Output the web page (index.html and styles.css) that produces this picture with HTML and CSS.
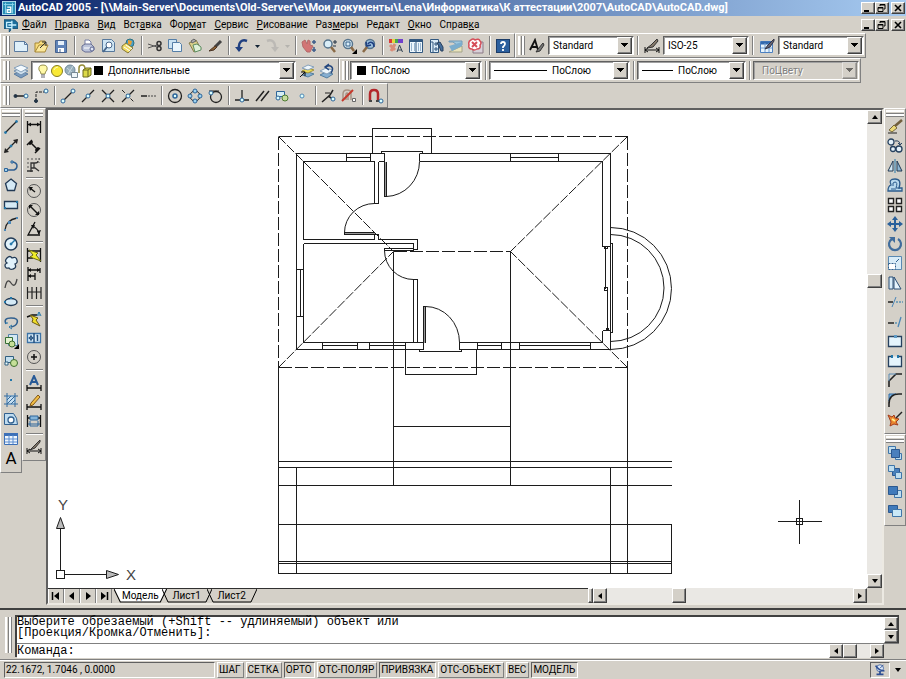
FILE: index.html
```
<!DOCTYPE html>
<html lang="ru">
<head>
<meta charset="UTF-8">
<meta name="viewport" content="width=device-width, initial-scale=1.0">
<title>AutoCAD 2005</title>
<link rel="stylesheet" href="styles.css">
</head>
<body>
<header class="titlebar">
<svg class="app-icon" viewBox="0 0 16 16"><rect x="0.5" y="0.5" width="15" height="15" fill="#2a8fb8" stroke="#bfe8f4"/><path d="M4 2v12M12 2v12M2 4h12" stroke="#8fd8ee"/><path d="M6 7h4v6H6v-3h4" stroke="#fff" stroke-width="1.5"/></svg>
<h1>AutoCAD 2005 - [\\Main-Server\Documents\Old-Server\e\Мои документы\Lena\Информатика\К аттестации\2007\AutoCAD\AutoCAD.dwg]</h1>
<div class="window-buttons">
<button aria-label="Свернуть"><svg viewBox="0 0 12 10"><path d="M2 8h5" stroke-width="2"/></svg></button>
<button aria-label="Восстановить"><svg viewBox="0 0 12 10"><path d="M4 3V1.5h5V6H8M4 2h5M2 4.5h5V8.5H2zM2 5h5"/></svg></button>
<button class="close" aria-label="Закрыть"><svg viewBox="0 0 12 10"><path d="M3 2l6 6M9 2L3 8" stroke-width="1.6"/></svg></button>
</div>
</header>
<nav class="menubar">
<svg class="app-icon" viewBox="0 0 16 16"><path d="M0 2h12l4 4v6H9l-3 4v-4H0z" fill="#1d6f9c" stroke="#164e74"/><path d="M3 5h6v6H3zM9 3v11M5 8h9" stroke="#c8f0ff" stroke-width="1.5"/></svg>
<a href="#"><u>Ф</u>айл</a>
<a href="#"><u>П</u>равка</a>
<a href="#"><u>В</u>ид</a>
<a href="#">Вст<u>а</u>вка</a>
<a href="#">Фор<u>м</u>ат</a>
<a href="#"><u>С</u>ервис</a>
<a href="#"><u>Р</u>исование</a>
<a href="#">Раз<u>м</u>еры</a>
<a href="#">Ре<u>д</u>акт</a>
<a href="#"><u>О</u>кно</a>
<a href="#">Справ<u>к</u>а</a>
<div class="window-buttons">
<button aria-label="Свернуть окно"><svg viewBox="0 0 12 10"><path d="M2 8h5" stroke-width="2"/></svg></button>
<button aria-label="Восстановить окно"><svg viewBox="0 0 12 10"><path d="M4 3V1.5h5V6H8M4 2h5M2 4.5h5V8.5H2zM2 5h5"/></svg></button>
<button class="close" aria-label="Закрыть окно"><svg viewBox="0 0 12 10"><path d="M3 2l6 6M9 2L3 8" stroke-width="1.6"/></svg></button>
</div>
</nav>

<div class="toolbar-row">
<!-- Standard -->
<div class="toolbar">
<i class="grip"></i>
<button class="tool" title="Создать"><svg viewBox="0 0 16 16"><path d="M1.500 3.500h10l3 3v7h-13z" fill="#dff0fa" stroke="#5b7ba0"/><path d="M11.500 3.500v3h3" stroke="#5b7ba0"/></svg></button>
<button class="tool" title="Открыть"><svg viewBox="0 0 16 16"><path d="M2 14V5h4l1-2h5v4" fill="#f7dc7c" stroke="#a88836"/><path d="M2 14l4-7h9l-3 7z" fill="#fbe89c" stroke="#a88836"/><path d="M7 10l6-6M13 8V4H9" stroke="#333"/></svg></button>
<button class="tool" title="Сохранить"><svg viewBox="0 0 16 16"><path d="M2.500 2.500h11v12h-11z" fill="#5f83b8" stroke="#46628e"/><path d="M5 3h6v4H5z" fill="#e6f0fa" stroke="none"/><path d="M5 10h6v4H5z" fill="#fff" stroke="none"/><path d="M7 11v3" stroke="#46628e"/></svg></button>
<i class="sep"></i>
<button class="tool" title="Печать"><svg viewBox="0 0 16 16"><path d="M5 7V2h4l2 2v3" fill="#fff" stroke="#777fa5"/><path d="M2 8l3-2h6l3 3v3l-3 2H5l-3-2z" fill="#bcc4da" stroke="#686f94"/><path d="M4 10h7" stroke="#fff"/><circle cx="12" cy="11" r="2" fill="#dfe6f6" stroke="#5e6790"/></svg></button>
<button class="tool" title="Просмотр"><svg viewBox="0 0 16 16"><path d="M2.500 1.500h9l3 3v9h-12z" fill="#cfe5f3" stroke="#56789c"/><circle cx="9" cy="7" r="3" fill="#fff" stroke="#48688c"/><path d="M7 9l-4 5" stroke="#48688c" stroke-width="2"/></svg></button>
<button class="tool" title="Публикация"><svg viewBox="0 0 16 16"><circle cx="10" cy="5" r="4" fill="#48a0c8" stroke="#2e7080"/><path d="M8 2l4 1-1 4-3-1z" fill="#e8a030" stroke="none"/><path d="M2 8l4-3 7 5-5 5-6-4z" fill="#f1dc66" stroke="#857838"/><path d="M4 9l6 4M6 7l6 4" stroke="#fff"/></svg></button>
<i class="sep"></i>
<button class="tool" title="Вырезать"><svg viewBox="0 0 16 16"><path d="M1 6l9 3M1 10l9-3" stroke="#555"/><circle cx="12" cy="5.500" r="2" stroke="#333" stroke-width="1.500"/><circle cx="12" cy="10.500" r="2" stroke="#333" stroke-width="1.500"/></svg></button>
<button class="tool" title="Копировать"><svg viewBox="0 0 16 16"><path d="M1.500 1.500h8v9h-8z" fill="#cbe3f3" stroke="#557fa8"/><path d="M5.500 4.500h7l2 2v7h-9z" fill="#eaf6fd" stroke="#557fa8"/></svg></button>
<button class="tool" title="Вставить"><svg viewBox="0 0 16 16"><path d="M2 5l7-3 5 9-7 3z" fill="#d9cf8a" stroke="#837b4b"/><path d="M4 3l3-2 2 2-4 2z" fill="#aaa" stroke="#666"/><path d="M6 7l4-1 4 3v3l-6 2z" fill="#dff0d8" stroke="#5e8e62"/></svg></button>
<button class="tool" title="Копирование свойств"><svg viewBox="0 0 16 16"><path d="M14 3L8 9" stroke="#444" stroke-width="3"/><path d="M8 8l-6 5 5-1 3-3z" fill="#8b6134" stroke="#4b3525"/></svg></button>
<i class="sep"></i>
<button class="tool" title="Отменить"><svg viewBox="0 0 16 16"><path d="M13 3C8 1 4 4 5 11" stroke="#1f3f80" stroke-width="2.500"/><path d="M1 9h8l-4 5z" fill="#1f3f80" stroke="none"/></svg></button>
<button class="tool tiny" title="Список отмены"><svg viewBox="0 0 8 16"><path d="M2 7h5L4.500 10z" fill="#123" stroke="none"/></svg></button>
<button class="tool faded" title="Повторить"><svg viewBox="0 0 16 16"><path d="M3 3c5-2 9 1 8 8" stroke="#999" stroke-width="2.500"/><path d="M7 9h8l-4 5z" fill="#999" stroke="none"/></svg></button>
<button class="tool tiny faded" title="Список повтора"><svg viewBox="0 0 8 16"><path d="M2 7h5L4.500 10z" fill="#888" stroke="none"/></svg></button>
<i class="sep"></i>
<button class="tool" title="Панорамирование"><svg viewBox="0 0 16 16"><path d="M1 4l3-2 2 4 1-4 2 1v4l3 1-3 6H6L2 9z" fill="#d27575" stroke="#b46a6a"/><path d="M13 2v4M11 4h4M13 9v5M11 12h4" stroke="#3d5c8b" stroke-width="1.500"/></svg></button>
<button class="tool" title="Зумирование"><svg viewBox="0 0 16 16"><circle cx="7" cy="6" r="4" fill="#d9edf7" stroke="#56748d" stroke-width="1.500"/><path d="M10 9l4 5" stroke="#8a6a47" stroke-width="2.500"/><path d="M14 2v4M12 4h4M12 8h3" stroke="#234"/></svg></button>
<button class="tool" title="Рамка"><svg viewBox="0 0 16 16"><circle cx="7" cy="6" r="4.500" fill="#d9edf7" stroke="#56748d" stroke-width="1.500"/><path d="M5 4h4v4H5z" stroke="#36618a"/><path d="M10 9l3 4" stroke="#8a6a47" stroke-width="2.500"/><path d="M16 11v5h-5z" fill="#000" stroke="none"/></svg></button>
<button class="tool" title="Предыдущий"><svg viewBox="0 0 16 16"><circle cx="9" cy="6" r="4.500" fill="#9cc0dc" stroke="#56748d" stroke-width="1.500"/><path d="M6 9l-4 5" stroke="#8a6a47" stroke-width="2.500"/><path d="M13 9C13 4 9 3 7 6M5 4l1 4 4-1" stroke="#1f3f80" stroke-width="1.500"/></svg></button>
<i class="sep"></i>
<button class="tool" title="Свойства"><svg viewBox="0 0 16 16"><path d="M1 1h3v4H1z" fill="#d93a3a" stroke="none"/><path d="M4 1h3v4H4z" fill="#e6d740" stroke="none"/><path d="M7 1h3v4H7z" fill="#42ab4c" stroke="none"/><path d="M10 1h5v4h-5z" fill="#7040cc" stroke="none"/><path d="M2 7l5 5M3 13l4-7" stroke="#d98c78" stroke-width="3"/><path d="M9 14l2.500-7 3 7M10 12h4" stroke="#345"/></svg></button>
<button class="tool" title="Центр управления"><svg viewBox="0 0 16 16"><path d="M1.500 1.500h13v13h-13z" fill="#eef7fd" stroke="#31577f"/><path d="M2 3h12" stroke="#31577f" stroke-width="2"/><path d="M8 4v10" stroke="#31577f"/><path d="M3 6h1M6 6h1M3 8h1M6 8h1M3 10h1M6 10h1M3 12h1M6 12h1M10 6h1M12 6h1M10 8h1M12 8h1M10 10h1M12 10h1M10 12h1M12 12h1" stroke="#4273a1"/></svg></button>
<button class="tool" title="Инструментальные палитры"><svg viewBox="0 0 16 16"><path d="M2.500 1.500h8v13h-8z" fill="#dcedf9" stroke="#31577f"/><path d="M2 4h3v10M7 5h2v2H7zM7 10h2v2H7z" stroke="#31577f"/><path d="M9 5l3-1 3 5v4h-2l-2-5z" fill="#446e9c" stroke="#29405e"/></svg></button>
<button class="tool" title="Подшивки"><svg viewBox="0 0 16 16"><path d="M1 3h13v4H9L5 4H1z" fill="#9dc7df" stroke="#7199b5"/><path d="M1 14l13-6v6z" fill="#e9e3bc" stroke="#a4a488"/><path d="M1 8l13-4v4L4 13z" fill="#7badcd" stroke="none"/></svg></button>
<button class="tool" title="Пометки"><svg viewBox="0 0 16 16"><path d="M5 4h10v11H5z" fill="#d8d0d8" stroke="#8c7b86"/><path d="M3 2q2-2 4 0q4-2 5 1q2 2 0 4q1 4-3 4q-3 2-5 0q-4 0-3-4q-1-4 2-5z" fill="#fff" stroke="#d64d58" stroke-width="1.500"/><path d="M4 4l5 5M9 4L4 9" stroke="#d64d58" stroke-width="2"/></svg></button>
<i class="sep"></i>
<button class="tool" title="Справка"><svg viewBox="0 0 16 16"><rect x="1.500" y="1.500" width="13" height="13" fill="#2b5f9e" stroke="#1c3c68"/><path d="M6 6q0-2 2-2t2 2q0 1-2 3v1M8 11v2" stroke="#fff" stroke-width="1.800"/></svg></button>
</div>
<!-- Styles -->
<div class="toolbar">
<i class="grip"></i>
<button class="tool wide" title="Текстовый стиль"><svg viewBox="0 0 16 16"><path d="M1 12L6 2l3 10M3 9h5" stroke="#111" stroke-width="1.800"/><path d="M14 5l-5 6-2 3 4-1 4-6z" fill="#777" stroke="#333"/></svg></button>
<div class="combo w86"><select aria-label="Текстовый стиль"><option>Standard</option></select></div>
<i class="sep"></i>
<button class="tool wide" title="Размерный стиль"><svg viewBox="0 0 16 16"><path d="M1 9v6M15 9v6M1 12h14M4 10l-3 2 3 2M12 10l3 2-3 2" stroke="#111"/><path d="M13 1L7 7l-4 3 6-1 5-6z" fill="#877a6b" stroke="#333"/></svg></button>
<div class="combo w86"><select aria-label="Размерный стиль"><option>ISO-25</option></select></div>
<i class="sep"></i>
<button class="tool wide" title="Стиль таблиц"><svg viewBox="0 0 16 16"><path d="M1.500 3.500h12v11h-12z" fill="#e7f3fb" stroke="#4b7fc0"/><path d="M2 5h11" stroke="#3269ae" stroke-width="3"/><path d="M2 10h11M6 5v9M10 5v9" stroke="#6f9bd0"/><path d="M15 1L9 7l-3 4 5-2 4-6z" fill="#667" stroke="#334"/></svg></button>
<div class="combo w86"><select aria-label="Стиль таблиц"><option>Standard</option></select></div>
</div>
</div>

<div class="toolbar-row">
<!-- Layers -->
<div class="toolbar">
<i class="grip"></i>
<button class="tool" title="Слои"><svg viewBox="0 0 16 16"><path d="M1 11l7-3 7 3-7 4z" fill="#7b9cc0" stroke="#5c7c9f"/><path d="M1 8l7-3 7 3-7 4z" fill="#cfe0ee" stroke="#7390ad"/><path d="M1 5l7-3 7 3-7 4z" fill="#f4fafe" stroke="#86a1bb"/></svg></button>
<div class="combo layer-combo">
<svg class="mark" viewBox="0 0 14 16"><path d="M5 11q0-2-2-4q-1-5 4-5t4 5q-2 2-2 4z" fill="#fff9a8" stroke="#96904d"/><path d="M5 12h4M5 14h4" stroke="#667"/></svg>
<svg class="mark" viewBox="0 0 14 16"><circle cx="7" cy="8" r="5.500" fill="#f9e936" stroke="#857c21"/><path d="M4 7q1-3 4-3" stroke="#fffbc0"/></svg>
<svg class="mark" viewBox="0 0 14 16"><circle cx="6" cy="7" r="5" fill="#98afbc" stroke="#71899a"/><path d="M3 5l6 5M9 3L4 11" stroke="#c8d8e0"/><path d="M7.500 9.500h6v5h-6z" fill="#eef5f8" stroke="#778894"/></svg>
<svg class="mark" viewBox="0 0 14 16"><path d="M1 10V5q0-3 3-3t3 4" stroke="#958c35" stroke-width="1.500"/><path d="M5 7l3-2h5v7l-3 2H5z" fill="#dcd949" stroke="#6c6a20"/><path d="M5 7h5v7M10 7l3-2" stroke="#6c6a20"/></svg>
<i class="swatch"></i>
<select aria-label="Слой"><option>Дополнительные</option></select>
</div>
<button class="tool" title="Сделать слой текущим"><svg viewBox="0 0 16 16"><path d="M3 12l6-3 6 2-6 3z" fill="#84aed1" stroke="#557e9f"/><path d="M3 8l6-3 6 2-6 3z" fill="#eadb58" stroke="#a6963a"/><path d="M3 5l6-3 6 2-6 3z" fill="#eff7fb" stroke="#86a1bb"/><path d="M1 14l5-5M2 9h4v4" stroke="#111"/></svg></button>
<button class="tool" title="Предыдущее состояние"><svg viewBox="0 0 16 16"><path d="M1 12l6-3 7 2-6 4z" fill="#84aed1" stroke="#557e9f"/><path d="M1 8l6-3 7 2-6 4z" fill="#eff7fb" stroke="#86a1bb"/><path d="M12 10c4-6-1-9-5-6M10 1L6 4l4 3" stroke="#24477e" stroke-width="1.500"/></svg></button>
</div>
<!-- Properties -->
<div class="toolbar">
<i class="grip"></i>
<div class="combo color-combo"><i class="swatch"></i><select aria-label="Цвет"><option>ПоСлою</option></select></div>
<i class="sep"></i>
<div class="combo linetype-combo"><i class="line long"></i><select aria-label="Тип линий"><option>ПоСлою</option></select></div>
<i class="sep"></i>
<div class="combo weight-combo"><i class="line"></i><select aria-label="Вес линий"><option>ПоСлою</option></select></div>
<i class="sep"></i>
<div class="combo plot-combo off"><select aria-label="Стиль печати" disabled><option>ПоЦвету</option></select></div>
</div>
</div>

<div class="toolbar-row">
<!-- Object snap -->
<div class="toolbar">
<i class="grip"></i>
<button class="tool" title="Точка отслеживания"><svg viewBox="0 0 16 16"><path d="M3 8h8" stroke="#222" stroke-width="1.500"/><circle cx="2.500" cy="8" r="1.500" fill="#234" stroke="#234"/><circle cx="13" cy="8" r="2" fill="#dff" stroke="#2e6599"/></svg></button>
<button class="tool" title="Смещение"><svg viewBox="0 0 16 16"><path d="M3 13V4h8" stroke="#222" stroke-dasharray="3 1"/><circle cx="3" cy="13" r="1.500" fill="#234" stroke="#234"/><circle cx="13" cy="3" r="2" fill="#dff" stroke="#2e6599"/></svg></button>
<i class="sep"></i>
<button class="tool" title="Конечная точка"><svg viewBox="0 0 16 16"><path d="M4 12l8-8" stroke="#222" stroke-width="1.300"/><circle cx="3" cy="13" r="2" fill="#dff" stroke="#2e6599"/><circle cx="13" cy="3" r="2" fill="#dff" stroke="#2e6599"/></svg></button>
<button class="tool" title="Середина"><svg viewBox="0 0 16 16"><path d="M2 14L14 2" stroke="#222" stroke-width="1.300"/><circle cx="8" cy="8" r="2" fill="#dff" stroke="#2e6599"/></svg></button>
<button class="tool" title="Пересечение"><svg viewBox="0 0 16 16"><path d="M2 2l12 12M2 14L14 2" stroke="#222" stroke-width="1.300"/><circle cx="8" cy="8" r="2" fill="#dff" stroke="#2e6599"/></svg></button>
<button class="tool" title="Кажущееся пересечение"><svg viewBox="0 0 16 16"><path d="M2 14L14 2" stroke="#222" stroke-width="1.300"/><path d="M2 2l12 12" stroke="#222" stroke-dasharray="4 2"/><circle cx="8" cy="8" r="2" fill="#dff" stroke="#2e6599"/></svg></button>
<button class="tool" title="Продолжение"><svg viewBox="0 0 16 16"><path d="M1 8h6" stroke="#222" stroke-width="1.500"/><path d="M8 8h8" stroke="#444" stroke-dasharray="2 1"/></svg></button>
<i class="sep"></i>
<button class="tool" title="Центр"><svg viewBox="0 0 16 16"><circle cx="8" cy="8" r="6.500" stroke="#222" stroke-width="1.300"/><circle cx="8" cy="8" r="2" fill="#dff" stroke="#2e6599" stroke-width="1.500"/></svg></button>
<button class="tool" title="Квадрант"><svg viewBox="0 0 16 16"><circle cx="8" cy="8" r="5" stroke="#222"/><g fill="#9ed2ef" stroke="#2e6599"><circle cx="8" cy="3" r="2"/><circle cx="8" cy="13" r="2"/><circle cx="3" cy="8" r="2"/><circle cx="13" cy="8" r="2"/></g></svg></button>
<button class="tool" title="Касательная"><svg viewBox="0 0 16 16"><circle cx="9" cy="9" r="5.500" stroke="#222" stroke-width="1.300"/><path d="M2 3h10" stroke="#222"/><circle cx="4" cy="5" r="2" fill="#dff" stroke="#2e6599"/></svg></button>
<i class="sep"></i>
<button class="tool" title="Нормаль"><svg viewBox="0 0 16 16"><path d="M8 2v10M1 12h14" stroke="#222" stroke-width="1.300"/><circle cx="8" cy="12" r="2" fill="#dff" stroke="#2e6599"/></svg></button>
<button class="tool" title="Параллельно"><svg viewBox="0 0 16 16"><path d="M2 13L10 3M7 13l8-10" stroke="#222" stroke-width="1.500"/></svg></button>
<button class="tool" title="Точка вставки"><svg viewBox="0 0 16 16"><path d="M2.500 3.500h8v5h-8z" fill="#d6eef3" stroke="#2e6599"/><circle cx="11" cy="10" r="3" fill="#c7dd9f" stroke="#4f7d33"/><circle cx="4" cy="10" r="2" fill="#dff" stroke="#2e6599"/></svg></button>
<button class="tool" title="Узел"><svg viewBox="0 0 16 16"><circle cx="8" cy="8" r="2" fill="#dff" stroke="#5088b4"/></svg></button>
<i class="sep"></i>
<button class="tool" title="Ближайшая"><svg viewBox="0 0 16 16"><path d="M1 14l8-7 3-5M7 8l5 3" stroke="#222" stroke-width="1.500"/><path d="M4 5h5" stroke="#222"/><circle cx="12" cy="11" r="2" fill="#dff" stroke="#2e6599"/></svg></button>
<button class="tool" title="Ничего"><svg viewBox="0 0 16 16"><path d="M2 12V6q0-4 4-4t4 3v7M5 12V6q1-2 2 0v6" stroke="#a89485" stroke-width="1.500"/><path d="M1 13L12 2" stroke="#c7392b" stroke-width="2"/><path d="M11.500 10.500h3v3h-3z" fill="#fff" stroke="#666"/></svg></button>
<i class="sep"></i>
<button class="tool" title="Режимы привязки"><svg viewBox="0 0 16 16"><path d="M2 13V6q0-4 4-4t4 4v7" stroke="#b3272b" stroke-width="2.500"/><path d="M1 13h3M8 13h3" stroke="#444" stroke-width="2"/><circle cx="13" cy="13" r="2" fill="#dff" stroke="#2e6599"/></svg></button>
</div>
</div>

<main class="workspace">
<!-- Draw -->
<div class="toolbar vertical alternate draw">
<i class="grip"></i>
<button class="tool" title="Отрезок"><svg viewBox="0 0 16 16"><path d="M3 13L13 3" stroke="#222" stroke-width="1.300"/><circle cx="2.500" cy="13.500" r="1" fill="#27a" stroke="#27a"/><circle cx="13.500" cy="2.500" r="1" fill="#27a" stroke="#27a"/></svg></button>
<button class="tool" title="Прямая"><svg viewBox="0 0 16 16"><path d="M2 14L14 2" stroke="#222" stroke-width="1.300"/><path d="M1 15l1-5 4 4zM15 1l-5 1 4 4z" fill="#222" stroke="none"/><circle cx="8" cy="8" r="1" fill="#27a" stroke="#27a"/></svg></button>
<button class="tool" title="Полилиния"><svg viewBox="0 0 16 16"><path d="M2 12h9q3-1 3-4t-4-4H9" stroke="#315f91" stroke-width="1.500"/><path d="M1.500 10.500h3v3h-3zM8 3h2v2H8z" fill="#a5d4ef" stroke="#2e6599"/></svg></button>
<button class="tool" title="Многоугольник"><svg viewBox="0 0 16 16"><path d="M8 2l5.500 4.500-2 7h-7l-2-7z" fill="#d5eaf6" stroke="#223a55" stroke-width="1.300"/></svg></button>
<button class="tool" title="Прямоугольник"><svg viewBox="0 0 16 16"><path d="M1.500 4.500h13v7h-13z" fill="#d5eaf6" stroke="#223a55" stroke-width="1.300"/><path d="M1 10h2v2H1zM13 4h2v2h-2z" fill="#27a" stroke="none"/></svg></button>
<button class="tool" title="Дуга"><svg viewBox="0 0 16 16"><path d="M2 14Q3 4 14 2" stroke="#222" stroke-width="1.300"/><path d="M1 13h2v2H1zM5 5h3v3H5zM13 1h2v2h-2z" fill="#4c88b9" stroke="none"/></svg></button>
<button class="tool" title="Круг"><svg viewBox="0 0 16 16"><circle cx="8" cy="8" r="6" fill="#e1f2fb" stroke="#223a55" stroke-width="1.500"/><path d="M8 8l4-4" stroke="#27a" stroke-width="1.500"/><circle cx="8" cy="8" r="1" fill="#27a" stroke="#27a"/></svg></button>
<button class="tool" title="Облако"><svg viewBox="0 0 16 16"><path d="M4 3q3-3 5 0q4-2 5 2q1 3-2 4q2 4-2 5q-3 1-4-1q-4 1-4-3q0-1 2-2q-3-2 0-5z" fill="#e1f2fb" stroke="#223a55" stroke-width="1.300"/></svg></button>
<button class="tool" title="Сплайн"><svg viewBox="0 0 16 16"><path d="M2 13Q4 2 8 8T14 4" stroke="#444" stroke-width="1.300"/></svg></button>
<button class="tool" title="Эллипс"><svg viewBox="0 0 16 16"><ellipse cx="8" cy="8" rx="6" ry="3.500" fill="#d5eaf6" stroke="#223a55" stroke-width="1.500"/><path d="M7 3h2v2H7zM1 7h2v2H1z" fill="#27a" stroke="none"/></svg></button>
<button class="tool" title="Эллиптическая дуга"><svg viewBox="0 0 16 16"><path d="M3 10Q0 4 8 4t6 5q-1 3-6 4" stroke="#31608f" stroke-width="1.500"/><path d="M5 9H2M9 11l-3 2 3 2" stroke="#27a"/></svg></button>
<button class="tool" title="Вставить блок"><svg viewBox="0 0 16 16"><path d="M5.500 1.500h9v11h-9z" fill="#d4e8f4" stroke="#5481a7"/><path d="M2.500 4.500h7v6h-7z" fill="#e4f2d0" stroke="#356e35"/><circle cx="9" cy="11" r="3" fill="#c5df98" stroke="#3e6d2f"/><path d="M16 11v5h-5z" fill="#000" stroke="none"/></svg></button>
<button class="tool" title="Создать блок"><svg viewBox="0 0 16 16"><path d="M2.500 3.500h8v6h-8z" fill="#c4dfee" stroke="#315f80"/><circle cx="11" cy="10" r="3.500" fill="#c5df98" stroke="#3e6d2f"/><path d="M2 9h3v3H2z" fill="#eff" stroke="#315f80"/></svg></button>
<button class="tool" title="Точка"><svg viewBox="0 0 16 16"><path d="M7 7h2v2H7z" fill="#27a" stroke="none"/></svg></button>
<button class="tool" title="Штриховка"><svg viewBox="0 0 16 16"><path d="M3 3h10v10H3z" fill="#c7e0f2" stroke="none"/><path d="M1 4h14M1 12h14M4 1v14M12 1v14M4 8l4-4M4 12l8-8M8 12l4-4" stroke="#356999"/></svg></button>
<button class="tool" title="Область"><svg viewBox="0 0 16 16"><path d="M1.500 2.500h9q4 4 4 11h-13z" fill="#bfdcf0" stroke="#31608f"/><circle cx="8" cy="9" r="3" fill="#fff" stroke="#31608f" stroke-width="1.300"/></svg></button>
<button class="tool" title="Таблица"><svg viewBox="0 0 16 16"><path d="M1.500 2.500h13v11h-13z" fill="#f0f7fd" stroke="#3c70b8"/><path d="M1 3.500h14" stroke="#3c70b8" stroke-width="3"/><path d="M2 8h12M2 11h12M6 4v9M10 4v9" stroke="#5a8cd0"/></svg></button>
<button class="tool letter" title="Текст">A</button>
</div>
<!-- Dimension -->
<div class="toolbar vertical dimension">
<i class="grip"></i>
<button class="tool" title="Линейный"><svg viewBox="0 0 16 16"><path d="M1.500 2v12M14.500 2v12M2 5.500h12" stroke="#111" stroke-width="1.300"/><path d="M2 5.500l3-2v4zM14 5.500l-3-2v4z" fill="#111" stroke="none"/></svg></button>
<button class="tool" title="Параллельный"><svg viewBox="0 0 16 16"><path d="M1 7l5-5M9 15l5-5M4 4l8 8M4 4h3M4 4v3M12 12H9M12 12V9" stroke="#111" stroke-width="1.500"/></svg></button>
<button class="tool" title="Ординатный"><svg viewBox="0 0 16 16"><path d="M5 15V6h4q3 0 3-2M5 11h4l4 3M8 6v5M1 14h6" stroke="#333" stroke-width="1.300"/><path d="M2 1v12M5 2h9M13 1v5" stroke="#555" stroke-dasharray="2 2"/></svg></button>
<i class="sep"></i>
<button class="tool" title="Радиус"><svg viewBox="0 0 16 16"><circle cx="8" cy="8" r="6.500" stroke="#555"/><path d="M9 9L4 5" stroke="#111" stroke-width="1.500"/><path d="M3 4h4L4 8z" fill="#111" stroke="none"/></svg></button>
<button class="tool" title="Диаметр"><svg viewBox="0 0 16 16"><circle cx="8" cy="8" r="6.500" stroke="#555"/><path d="M4 4l8 8" stroke="#111" stroke-width="1.500"/><path d="M3 3h4L3 7zM13 13H9l4-4z" fill="#111" stroke="none"/></svg></button>
<button class="tool" title="Угловой"><svg viewBox="0 0 16 16"><path d="M9 1L2 14h12M6 5q6 2 7 8" stroke="#111" stroke-width="1.300"/><path d="M5 4h4l-2 4zM15 9l-2 5-2-4z" fill="#111" stroke="none"/></svg></button>
<i class="sep"></i>
<button class="tool" title="Быстрый размер"><svg viewBox="0 0 16 16"><path d="M1.500 1v14M14.500 1v14M2 4h12M2 11h5" stroke="#111" stroke-width="1.300"/><path d="M3 3l9 3-2 2 5 6-11-4 3-2z" fill="#f1ef28" stroke="#6a6a17"/></svg></button>
<button class="tool" title="Базовый"><svg viewBox="0 0 16 16"><path d="M2 1v14M2 4h12M14 2v5M2 10h7M9 7v7" stroke="#111" stroke-width="1.300"/><path d="M2 4l3-2v4zM14 4l-3-2v4zM2 10l3-2v4z" fill="#111" stroke="none"/></svg></button>
<button class="tool" title="Цепь"><svg viewBox="0 0 16 16"><path d="M1.500 2v12M6 2v12M10.500 2v12M15 2v12M1 7h14" stroke="#222" stroke-width="1.200"/></svg></button>
<i class="sep"></i>
<button class="tool" title="Выноска"><svg viewBox="0 0 16 16"><path d="M1 6l5-2h5" stroke="#111" stroke-width="1.500"/><path d="M4 4l8 3-2 2 4 6-8-4 1-3z" fill="#f1df28" stroke="#6a5a17"/><path d="M11 5l2-4 2 4M12 4h2" stroke="#27a"/></svg></button>
<button class="tool" title="Допуск"><svg viewBox="0 0 16 16"><path d="M1.500 3.500h13v9h-13z" fill="#d8ebf8" stroke="#3d74a8" stroke-width="1.300"/><path d="M8 3v10M11.500 5v6M10.500 5.500h1" stroke="#23507f" stroke-width="1.500"/><circle cx="5" cy="8" r="1.500" stroke="#23507f"/><path d="M5 5v6M2.500 8h5" stroke="#23507f"/></svg></button>
<button class="tool" title="Маркер центра"><svg viewBox="0 0 16 16"><circle cx="8" cy="8" r="6.500" stroke="#555"/><path d="M8 5v6M5 8h6" stroke="#111" stroke-width="1.500"/></svg></button>
<i class="sep"></i>
<button class="tool" title="Редактировать размер"><svg viewBox="0 0 16 16"><path d="M4 10l4-9 4 9M5 7h6" stroke="#285a97" stroke-width="2"/><path d="M1 10v6M15 10v6M1 13h14" stroke="#111" stroke-width="1.300"/></svg></button>
<button class="tool" title="Редактировать текст"><svg viewBox="0 0 16 16"><path d="M1 10v6M15 10v6M1 13h14" stroke="#111" stroke-width="1.300"/><path d="M12 1L5 9l-1 3 3-1 7-8z" fill="#f1bd45" stroke="#805618"/></svg></button>
<button class="tool" title="Обновить"><svg viewBox="0 0 16 16"><path d="M1.500 2v12M14.500 2v12M1 5h14" stroke="#111" stroke-width="1.300"/><path d="M4 3h8v4H4z" fill="#85b5da" stroke="#2f669b"/><path d="M4 8v5h8V8M2 11h12" stroke="#2f669b"/></svg></button>
<i class="sep"></i>
<button class="tool" title="Стили"><svg viewBox="0 0 16 16"><path d="M1 9v6M15 9v6M1 12h14M4 10l-3 2 3 2M12 10l3 2-3 2" stroke="#111"/><path d="M14 1L8 7l-4 4 5-2 5-6z" fill="#877a6b" stroke="#333"/></svg></button>
</div>

<div class="drawing-window">
<svg class="drawing">
<g class="plan" transform="translate(-48.500 -109.500)">
<!-- roof -->
<g class="dashed">
<path d="M279 136H628M628 136V367M279 367H628M279 136V367M394 251H511"/>
<path class="slope" d="M279 136L394 251M279 367L394 251M628 136L511 251M628 367L511 251"/>
</g>
<!-- outer walls -->
<path d="M373 153V128H432V153"/>
<path d="M385 153H297V349H424M420 153H611V349H460"/>
<path d="M375 161H304V239H375V234M385 153V161H379M420 161H603V246H611M603 330H611M603 330V342H460V349"/>
<path d="M304 243V342H424V349"/>
<!-- windows -->
<path d="M347 153V161M371 153V161M347 157H371M511 153V161M559 153V161M511 157H559"/>
<path d="M297 269H304M297 316H304M301 269V316"/>
<path d="M323 342V349M358 342V349M323 345H358M370 342V349M406 342V349M370 345H406"/>
<path d="M478 342V349M502 342V349M478 345H502M520 342V349M591 342V349M520 345H591"/>
<!-- inner walls -->
<path d="M375 161V203H379V161M379 234V239H418V249H414V243H304M375 234H379"/>
<path d="M414 342V279H418V342"/>
<!-- doors -->
<path class="soft" d="M345 233H375M425 306V342M386 161V196"/>
<path d="M382 153V151H423V153M385 161V196H387V161"/>
<path class="curve" d="M387 196A34 35 0 0 0 420 161V153"/>
<path d="M375 232H345V234H375"/>
<path class="curve" d="M345 232A30 29 0 0 1 375 203"/>
<path d="M414 248H385V250H414"/>
<path class="curve" d="M385 250A29 29 0 0 0 414 279"/>
<path d="M420 349V351H462V349M424 342V306H426V342"/>
<path class="curve" d="M426 306A34 36 0 0 1 460 342"/>
<path d="M406 349V374H477V349"/>
<!-- bay -->
<path d="M611 243H613V332H611M606 246V288M608 288V330M605 246h3v2h-3zM605 287h3v3h-3zM607 328h2v2h-2z"/>
<path class="curve" d="M611 227A61 61 0 0 1 611 349M611 234A53 53 0 0 1 611 341"/>
<!-- facade -->
<path d="M394 251V485M511 251V485M394 426H511"/>
<path d="M279 367V573M628 367V573M279 461H672M279 467H672M279 485H672M297 467V573M611 467V573"/>
<path d="M279 524H672V573H279M279 561H672M279 563H672"/>
<!-- ucs icon and cursor -->
<path d="M57 570h8v8h-8zM61 570V528M65 574H107"/>
<path class="curve arrow" d="M61 517l4 11h-8zM119 574l-12-4v8z"/>
<path d="M778 521h44M800 499v44M797 518h6v6h-6z"/>
</g>
<text x="10" y="400">Y</text>
<text x="78" y="470">X</text>
</svg>
<div class="vscroll">
<button class="face up" aria-label="Вверх"></button>
<i class="track top-track"></i>
<i class="face thumb"></i>
<i class="track bottom-track"></i>
<button class="face down" aria-label="Вниз"></button>
</div>
<div class="sheet-row">
<div class="sheets">
<button class="nav" aria-label="Первый лист"><svg viewBox="0 0 12 12"><path d="M2.500 2v8" stroke-width="1.500"/><path d="M9 2v8L4 6z" fill="#000" stroke="none"/></svg></button>
<button class="nav" aria-label="Предыдущий лист"><svg viewBox="0 0 12 12"><path d="M8 2v8L3 6z" fill="#000" stroke="none"/></svg></button>
<button class="nav" aria-label="Следующий лист"><svg viewBox="0 0 12 12"><path d="M4 2v8l5-4z" fill="#000" stroke="none"/></svg></button>
<button class="nav" aria-label="Последний лист"><svg viewBox="0 0 12 12"><path d="M9.500 2v8" stroke-width="1.500"/><path d="M3 2v8l5-4z" fill="#000" stroke="none"/></svg></button>
<button class="sheet active"><svg viewBox="0 0 50 14" preserveAspectRatio="none"><path d="M0 0l6 13h38l6-13"/></svg><span>Модель</span></button>
<button class="sheet"><svg viewBox="0 0 50 14" preserveAspectRatio="none"><path d="M0 0l6 13h38l6-13"/></svg><span>Лист1</span></button>
<button class="sheet"><svg viewBox="0 0 50 14" preserveAspectRatio="none"><path d="M0 0l6 13h38l6-13"/></svg><span>Лист2</span></button>
</div>
<div class="hscroll">
<i class="face split"></i>
<button class="face left" aria-label="Влево"></button>
<i class="track near"></i>
<i class="face thumb"></i>
<i class="track far"></i>
<button class="face right" aria-label="Вправо"></button>
</div>
</div>
<i class="corner"></i>
</div>

<div class="right-dock">
<!-- Modify -->
<div class="toolbar vertical alternate">
<i class="grip"></i>
<button class="tool" title="Стереть"><svg viewBox="0 0 16 16"><path d="M15 1L8 7" stroke="#715f3d" stroke-width="2.500"/><path d="M2 11l5-5 3 3-5 4z" fill="#ecd978" stroke="#77683a"/><path d="M1 14h9" stroke="#222"/></svg></button>
<button class="tool" title="Копировать объект"><svg viewBox="0 0 16 16"><g fill="#e5f2fa" stroke="#26415f" stroke-width="1.300"><circle cx="4" cy="4" r="3"/><circle cx="6" cy="11" r="2.500"/><circle cx="12" cy="11" r="3"/></g><path d="M8 3q5-1 5 4M11 5l2 2 2-2" stroke="#26415f"/></svg></button>
<button class="tool" title="Зеркало"><svg viewBox="0 0 16 16"><path d="M6 3v10H1z" fill="#d5eaf6" stroke="#223a55"/><path d="M10 3v10h5z" fill="#8eb6d3" stroke="#223a55"/><path d="M8 1v14" stroke="#27a"/></svg></button>
<button class="tool" title="Подобие"><svg viewBox="0 0 16 16"><path d="M1 14h14v-3h-3q3-9-4-9t-4 6q-3 1-3 6z" fill="#b7d9ee" stroke="#2b5b8c" stroke-width="1.300"/><path d="M4 12h5M6 9q-1-4 2-4t1 6h4" stroke="#2b5b8c"/></svg></button>
<button class="tool" title="Массив"><svg viewBox="0 0 16 16"><path d="M1.500 1.500h5v5h-5zM9.500 1.500h5v5h-5zM1.500 9.500h5v5h-5zM9.500 9.500h5v5h-5z" fill="#fff" stroke="#222" stroke-width="1.400"/></svg></button>
<button class="tool" title="Перенести"><svg viewBox="0 0 16 16"><path d="M8 3v10M3 8h10" stroke="#29609b" stroke-width="2"/><path d="M8 0l3 4H5zM8 16l3-4H5zM0 8l4-3v6zM16 8l-4-3v6z" fill="#29609b" stroke="none"/></svg></button>
<button class="tool" title="Повернуть"><svg viewBox="0 0 16 16"><path d="M11 3a6 6 0 1 1-6 0" stroke="#406c9c" stroke-width="2.200"/><path d="M2 1h6v6z" fill="#406c9c" stroke="none"/></svg></button>
<button class="tool" title="Масштаб"><svg viewBox="0 0 16 16"><path d="M1.500 1.500h13v13h-13z" fill="#d9ecf8" stroke="#5989b3"/><path d="M1.500 8.500h7v6h-7z" fill="#fff" stroke="#31608f" stroke-dasharray="2 1"/><path d="M9 7l3-3" stroke="#31608f"/></svg></button>
<button class="tool" title="Растянуть"><svg viewBox="0 0 16 16"><path d="M2 2h4v12H2z" fill="#d9ecf8" stroke="#2a4e77"/><path d="M7 2l7 12H7z" fill="#e7f4fc" stroke="#2a4e77"/></svg></button>
<button class="tool" title="Обрезать"><svg viewBox="0 0 16 16"><path d="M1 8h5" stroke="#222" stroke-width="1.500"/><path d="M9 8h7" stroke="#27a" stroke-dasharray="2 1"/><path d="M9 3L5 13" stroke="#4a86b9"/></svg></button>
<button class="tool" title="Удлинить"><svg viewBox="0 0 16 16"><path d="M1 9h6" stroke="#222" stroke-width="1.500"/><path d="M8 9h3" stroke="#27a" stroke-dasharray="2 1"/><path d="M14 3l-3 10" stroke="#4a86b9" stroke-width="1.300"/></svg></button>
<button class="tool" title="Разорвать в точке"><svg viewBox="0 0 16 16"><path d="M1.500 3.500h13v10h-13z" fill="#e4f4fc" stroke="#26415f" stroke-width="1.300"/><path d="M7 2h3v3H7z" fill="#5d9ac5" stroke="none"/></svg></button>
<button class="tool" title="Разорвать"><svg viewBox="0 0 16 16"><path d="M5 3.500H1.500v10h13v-10H11" fill="#e4f4fc" stroke="#26415f" stroke-width="1.300"/><path d="M4 2h2v3H4zM10 2h2v3h-2z" fill="#27a" stroke="none"/></svg></button>
<button class="tool" title="Фаска"><svg viewBox="0 0 16 16"><path d="M2 15V9l7-7h6" stroke="#222" stroke-width="1.600"/><path d="M2 9V2h7" stroke="#5b8bb4"/></svg></button>
<button class="tool" title="Сопряжение"><svg viewBox="0 0 16 16"><path d="M2 9V2h7Q3 3 2 9z" fill="#78b0df" stroke="#316da7"/><path d="M2 15v-3Q2 2 12 2h3" stroke="#222" stroke-width="1.600"/></svg></button>
<button class="tool" title="Расчленить"><svg viewBox="0 0 16 16"><path d="M9 7l6-6" stroke="#222" stroke-width="1.500"/><path d="M1 4l4 2 2-2 1 3 4 1-3 3 2 3-4-1-4 2 1-4z" fill="#eb872f" stroke="#a33c1d"/><path d="M5 8l3 2" stroke="#ffef86" stroke-width="2"/></svg></button>
</div>
<!-- Draw order -->
<div class="toolbar vertical alternate">
<i class="grip"></i>
<button class="tool" title="На передний план"><svg viewBox="0 0 16 16"><path d="M1.500 1.500h7v7h-7zM8.500 8.500h6v6h-6z" fill="#bfdef0" stroke="#3f76aa"/><path d="M4.500 4.500h8v8h-8z" fill="#4a80bd" stroke="#2c598f"/></svg></button>
<button class="tool" title="На задний план"><svg viewBox="0 0 16 16"><path d="M5.500 4.500h7v7h-7z" fill="#4a80bd" stroke="#2c598f"/><path d="M1.500 1.500h6v6h-6zM8.500 8.500h6v6h-6z" fill="#bfdef0" stroke="#3f76aa"/></svg></button>
<button class="tool" title="Перед объектом"><svg viewBox="0 0 16 16"><path d="M7.500 6.500h7v7h-7z" fill="#bfdef0" stroke="#3f76aa"/><path d="M1.500 2.500h9v8h-9z" fill="#3f7abb" stroke="#2c598f"/></svg></button>
<button class="tool" title="За объектом"><svg viewBox="0 0 16 16"><path d="M1.500 2.500h9v7h-9z" fill="#3f7abb" stroke="#2c598f"/><path d="M5.500 6.500h9v7h-9z" fill="#c9e8f7" stroke="#3f76aa"/></svg></button>
</div>
</div>
</main>

<section class="command">
<i class="grip"></i>
<div class="console">
<div class="history">
<pre>Выберите обрезаемый (+Shift -- удлиняемый) объект или
[Проекция/Кромка/Отменить]:</pre>
<div class="history-scroll">
<button class="face up" aria-label="Прокрутить вверх"></button>
<button class="face down" aria-label="Прокрутить вниз"></button>
</div>
</div>
<div class="prompt">
<label for="cmd">Команда:</label>
<input id="cmd" type="text">
<div class="prompt-scroll">
<button class="face left" aria-label="Строка влево"></button>
<i class="face thumb"></i>
<i class="track"></i>
<button class="face right" aria-label="Строка вправо"></button>
</div>
</div>
</div>
</section>

<footer class="statusbar">
<output class="coords">22.1672, 1.7046 , 0.0000</output>
<button>ШАГ</button>
<button>СЕТКА</button>
<button class="on">ОРТО</button>
<button>ОТС-ПОЛЯР</button>
<button class="on">ПРИВЯЗКА</button>
<button>ОТС-ОБЪЕКТ</button>
<button>ВЕС</button>
<button class="on">МОДЕЛЬ</button>
<div class="tray">
<button class="on" aria-label="Центр связи"><svg viewBox="0 0 16 16"><circle cx="8" cy="6" r="4" fill="#dce8f6" stroke="#4565a0"/><path d="M3 3q4 6 10 6M8 9v3M4 13h8" stroke="#2e4f93" stroke-width="2"/><path d="M8 6l4-4" stroke="#2e4f93"/></svg></button>
<button class="menu" aria-label="Меню строки состояния"></button>
</div>
</footer>
</body>
</html>
```
FILE: styles.css
```
* {
    box-sizing: border-box;
}
body {
    margin: 0;
    height: 100vh;
    display: flex;
    flex-direction: column;
    overflow: hidden;
    background-color: #d4d0c8;
    color: #000;
    font-family: Roboto, "Liberation Sans", sans-serif;
    font-size: 10px;
}
svg {
    display: block;
    fill: none;
    stroke: #000;
}
button {
    padding: 0;
    border: 0;
    background: none;
    color: inherit;
    font: inherit;
}
i {
    display: block;
    flex: none;
}

/* title and menu */
.titlebar {
    height: 16px;
    flex: none;
    display: flex;
    align-items: center;
    padding: 0 1px 0 2px;
    background: linear-gradient(to right, #0a246a, #a6caf0);
    color: #fff;
}
.titlebar h1 {
    flex: 1;
    margin: 0 0 0 2px;
    font-size: 11px;
    line-height: 16px;
    font-weight: bold;
    white-space: nowrap;
}
.app-icon {
    width: 14px;
    height: 14px;
    flex: none;
}
.menubar {
    height: 17px;
    flex: none;
    display: flex;
    align-items: center;
    gap: 8px;
    padding: 0 1px 0 4px;
}
.menubar a {
    color: #000;
    text-decoration: none;
}
.menubar .app-icon {
    margin-right: -4px;
}
.window-buttons {
    display: flex;
    margin-left: auto;
}
.window-buttons button,
.face {
    background-color: #d4d0c8;
    border: 1px solid;
    border-color: #fff #404040 #404040 #fff;
    box-shadow: inset -1px -1px #808080;
}
.window-buttons button {
    width: 14px;
    height: 12px;
}
.window-buttons .close {
    margin-left: 2px;
}
.window-buttons svg {
    width: 12px;
    height: 10px;
}

/* toolbars */
.toolbar-row {
    height: 25px;
    flex: none;
    display: flex;
}
.toolbar {
    display: flex;
    align-items: center;
    padding: 0 1px 0 2px;
    border: 1px solid;
    border-color: #fff #808080 #808080 #fff;
}
.grip {
    width: 6px;
    height: 19px;
    margin-right: 2px;
    border: solid #fff;
    border-width: 0 2px;
    box-shadow: 1px 0 #808080, inset -1px 0 #808080;
}
.sep {
    width: 1px;
    height: 19px;
    margin: 0 3px;
    background-color: #808080;
    box-shadow: 1px 0 #fff;
}
.tool {
    width: 20px;
    height: 20px;
    flex: none;
    display: flex;
    align-items: center;
    justify-content: center;
}
.tool svg {
    width: 16px;
    height: 16px;
}
.tool.tiny {
    width: 10px;
}
.tool.tiny svg {
    width: 8px;
}
.tool.wide {
    width: 22px;
}
.faded {
    opacity: 0.4;
}
.combo {
    height: 19px;
    display: flex;
    align-items: center;
    padding: 0 1px 0 4px;
    background-color: #fff;
    border: 1px solid;
    border-color: #606060 #fff #fff #606060;
    box-shadow: inset 1px 1px #a0a0a0;
}
.combo select {
    flex: 1;
    min-width: 0;
    padding: 0;
    border: 0;
    background: none;
    appearance: none;
    color: #000;
    font: inherit;
}
/* drop-down arrow */
.combo::after {
    content: "";
    width: 13px;
    height: 15px;
    flex: none;
    background: linear-gradient(#000, #000) center 5px / 7px 1px no-repeat,
        linear-gradient(#000, #000) center 6px / 5px 1px no-repeat,
        linear-gradient(#000, #000) center 7px / 3px 1px no-repeat,
        linear-gradient(#000, #000) center 8px / 1px 1px no-repeat, #d4d0c8;
    border: 1px solid;
    border-color: #fff #404040 #404040 #fff;
    box-shadow: inset -1px -1px #808080;
}
.combo.off {
    padding-left: 8px;
    background-color: #d4d0c8;
}
.combo.off select {
    color: #808080;
    opacity: 1;
    text-shadow: 1px 1px #fff;
}
.combo.off::after {
    opacity: 0.5;
}
.w86 {
    width: 86px;
}
.layer-combo {
    width: 265px;
    margin-right: 1px;
}
.color-combo {
    width: 132px;
}
.linetype-combo {
    width: 141px;
}
.weight-combo {
    width: 109px;
}
.plot-combo {
    width: 106px;
}
.mark {
    width: 14px;
    height: 16px;
    flex: none;
}
.swatch {
    width: 9px;
    height: 9px;
    margin: 0 5px 0 2px;
    background-color: #000;
}
.line {
    width: 31px;
    height: 1px;
    margin-right: 5px;
    background-color: #000;
}
.line.long {
    width: 53px;
}

/* work area */
.workspace {
    flex: 1;
    min-height: 0;
    display: flex;
    align-items: flex-start;
}
.vertical {
    flex-direction: column;
    flex: none;
    padding: 1px 0 4px;
}
.vertical .grip {
    width: 18px;
    height: 6px;
    margin: 0 0 1px;
    border-width: 2px 0;
    box-shadow: 0 1px #808080, inset 0 -1px #808080;
}
.vertical .sep {
    width: 17px;
    height: 1px;
    margin: 3px 0;
    box-shadow: 0 1px #fff;
}
.vertical .tool {
    height: 19px;
}
.alternate .tool:nth-child(odd) {
    height: 20px;
}
.draw {
    width: 22px;
}
.dimension {
    width: 24px;
}
.tool.letter {
    font-size: 17px;
}
.right-dock {
    width: 22px;
    flex: none;
}
.drawing-window {
    flex: 1;
    min-width: 0;
    align-self: stretch;
    display: grid;
    grid-template-columns: 1fr 15px;
    grid-template-rows: 1fr 15px;
    border-top: 2px solid #606060;
    border-left: 2px solid #606060;
    border-right: 2px solid #ece9e2;
    border-bottom: 2px solid #ece9e2;
}
.drawing {
    width: 100%;
    height: 100%;
    min-height: 0;
    background-color: #fff;
}
.plan {
    stroke: #1c1c1c;
    shape-rendering: crispEdges;
}
.dashed {
    stroke-dasharray: 13 3;
}
.slope {
    stroke-dasharray: 10 2;
}
.curve,
.slope {
    shape-rendering: auto;
}
.soft {
    stroke: #999;
}
.arrow {
    fill: #bbb;
}
.drawing text {
    fill: #444;
    stroke: none;
    font-family: "Liberation Sans", sans-serif;
    font-size: 15px;
}

/* scroll bars */
.vscroll {
    display: flex;
    flex-direction: column;
}
.vscroll .face {
    height: 14px;
}
.track {
    background-color: #eae8e4;
}
.vscroll .top-track {
    flex: 150;
}
.vscroll .bottom-track {
    flex: 286;
}
.face {
    flex: none;
}
.up::before,
.down::before,
.left::before,
.right::before,
.menu::before {
    content: "";
    display: block;
    width: 0;
    margin: auto;
    border: 3px solid transparent;
}
.up::before {
    border-top-width: 0;
    border-bottom: 4px solid #000;
}
.down::before,
.menu::before {
    border-bottom-width: 0;
    border-top: 4px solid #000;
}
.left::before {
    border-left-width: 0;
    border-right: 4px solid #000;
}
.right::before {
    border-right-width: 0;
    border-left: 4px solid #000;
}
.sheet-row {
    display: flex;
}
.hscroll {
    width: 279px;
    display: flex;
}
.hscroll .face {
    width: 14px;
}
.hscroll .split {
    width: 5px;
}
.hscroll .near {
    flex: 65;
}
.hscroll .far {
    flex: 168;
}
.corner {
    background-color: #d4d0c8;
}

/* layout tabs */
.sheets {
    flex: 1;
    display: flex;
    border-top: 1px solid #303030;
}
.nav {
    width: 16px;
    border-right: 1px solid #808080;
    border-left: 1px solid #fff;
    display: flex;
    align-items: center;
    justify-content: center;
}
.nav svg {
    width: 12px;
    height: 12px;
}
.nav:nth-child(4) {
    margin-right: 2px;
}
.sheet {
    display: grid;
    margin-right: -5px;
    line-height: 14px;
}
.sheet svg,
.sheet span {
    grid-area: 1 / 1;
}
.sheet svg {
    width: 100%;
    height: 14px;
}
.sheet span {
    padding: 0 8px;
}
.sheet.active svg {
    fill: #fff;
}

/* command line */
.command {
    height: 54px;
    flex: none;
    display: flex;
    padding: 5px 7px 2px 5px;
    background: linear-gradient(#404040, #404040) 0 3px / 100% 2px no-repeat;
}
.command .grip {
    height: 36px;
    margin: 7px 4px 0 0;
}
.console {
    flex: 1;
    margin-top: 5px;
    border: 1px solid #404040;
    border-width: 2px 0 0 2px;
    font-family: "Liberation Mono", monospace;
    font-size: 12px;
}
.history {
    height: 27px;
    display: flex;
    background-color: #fff;
    border-bottom: 1px solid #808080;
}
.history pre {
    flex: 1;
    margin: 0;
    font: inherit;
    line-height: 11px;
}
.history-scroll {
    width: 15px;
    display: flex;
    flex-direction: column;
    border-right: 1px solid #404040;
}
.history-scroll .face {
    flex: 1;
}
.prompt {
    height: 14px;
    display: flex;
    background-color: #fff;
    line-height: 14px;
}
.prompt input {
    flex: 1;
    min-width: 0;
    padding: 0;
    border: 0;
    outline: none;
    font: inherit;
}
.prompt-scroll {
    width: 70px;
    padding-right: 15px;
    display: flex;
    background-color: #d4d0c8;
}
.prompt-scroll .face {
    width: 14px;
}
.prompt-scroll .track {
    flex: 1;
}

/* status bar */
.statusbar {
    height: 20px;
    flex: none;
    display: flex;
    align-items: center;
    gap: 2px;
    padding: 1px 2px 0 4px;
    border-top: 1px solid #808080;
    box-shadow: inset 0 1px #fff;
}
.statusbar button,
.coords {
    height: 16px;
    padding: 0 2px 0 1px;
    line-height: 14px;
    border: 1px solid;
    border-color: #fff #808080 #808080 #fff;
}
.coords {
    width: 211px;
}
.coords,
.statusbar .on {
    border-color: #606060 #fff #fff #606060;
}
.tray {
    margin-left: auto;
    display: flex;
    gap: 2px;
}
.statusbar .tray .on {
    width: 20px;
    padding: 0 1px;
}
.tray svg {
    width: 16px;
    height: 14px;
}
.statusbar .tray .menu {
    width: 12px;
    border: 0;
}
```
